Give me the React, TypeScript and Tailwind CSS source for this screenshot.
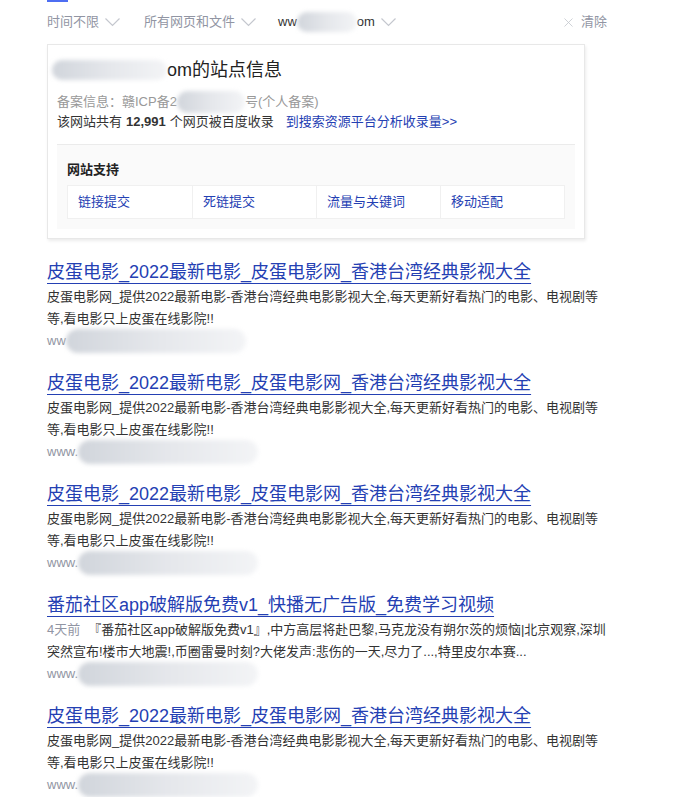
import { X } from "lucide-react"

const font = { fontFamily: '"Liberation Sans", Arial, "Noto Sans CJK SC", sans-serif' }

interface Result {
  title: string
  desc: React.ReactNode
}

function Blur({ w, h = 22 }: { w: number; h?: number }) {
  return (
    <span
      className="inline-block align-middle rounded-full bg-gradient-to-r from-gray-300 via-gray-200 to-gray-100 blur-[2px]"
      style={{ width: w, height: h }}
    />
  )
}

function Chevron() {
  return (
    <svg width="15" height="9" viewBox="0 0 15 9" className="ml-[6px]">
      <polyline points="0.5,0.5 7.5,7.5 14.5,0.5" fill="none" stroke="#c4c7ce" strokeWidth="1.2" />
    </svg>
  )
}

const normalDesc = "皮蛋电影网_提供2022最新电影-香港台湾经典电影影视大全,每天更新好看热门的电影、电视剧等等,看电影只上皮蛋在线影院!!"

const results: Result[] = [
  { title: "皮蛋电影_2022最新电影_皮蛋电影网_香港台湾经典影视大全", desc: normalDesc },
  { title: "皮蛋电影_2022最新电影_皮蛋电影网_香港台湾经典影视大全", desc: normalDesc },
  { title: "皮蛋电影_2022最新电影_皮蛋电影网_香港台湾经典影视大全", desc: normalDesc },
  {
    title: "番茄社区app破解版免费v1_快播无广告版_免费学习视频",
    desc: (
      <>
        <span className="text-[#9195a3] mr-2">4天前</span>
        『番茄社区app破解版免费v1』,中方高层将赴巴黎,马克龙没有朔尔茨的烦恼|北京观察,深圳突然宣布!楼市大地震!,币圈雷曼时刻?大佬发声:悲伤的一天,尽力了...,特里皮尔本赛...
      </>
    ),
  },
  { title: "皮蛋电影_2022最新电影_皮蛋电影网_香港台湾经典影视大全", desc: normalDesc },
]

export default function App() {
  return (
    <div className="w-[696px] h-[797px] overflow-hidden bg-white relative" style={font}>
      <div className="absolute left-[47px] top-0 w-[21px] h-[2px] bg-[#4e6ef2]" />

      <div className="pl-[47px] pr-[89px] h-[44px] flex items-center text-[13px] text-[#9195a3]">
        <div className="flex items-center mr-[24px]">
          时间不限 <Chevron />
        </div>
        <div className="flex items-center mr-[22px]">
          所有网页和文件 <Chevron />
        </div>
        <div className="flex items-center text-[#333]">
          <span className="flex items-center">
            ww<Blur w={60} h={20} />om
          </span>
          <Chevron />
        </div>
        <div className="ml-auto flex items-center gap-[5px]">
          <X className="w-[15px] h-[15px] text-[#c4c7ce]" strokeWidth={1.3} />
          清除
        </div>
      </div>

      <div className="ml-[47px] w-[538px] border border-[#e8e8e8] shadow-[1px_2px_3px_rgba(0,0,0,0.08)] px-[9px] pb-[9px]">
        <div className="flex items-center h-[48px] text-[18px] text-[#222] pt-[2px] -ml-[5px]">
          <Blur w={115} h={20} />
          <span>om的站点信息</span>
        </div>
        <div className="text-[13px] text-[#999] h-[18px] leading-[18px] flex items-center">
          备案信息：赣ICP备2<Blur w={68} h={22} />号(个人备案)
        </div>
        <div className="text-[13px] text-[#333] h-[22px] leading-[22px] flex items-center">
          该网站共有 <b className="font-bold mx-1">12,991</b> 个网页被百度收录
          <span className="ml-[12px] text-[#2440b3]">到搜索资源平台分析收录量&gt;&gt;</span>
        </div>
        <div className="mt-[11px] border-t border-[#ebebeb] bg-[#fafafa] px-[10px] pb-[10px]">
          <div className="h-[40px] flex items-center pt-[9px] text-[13px] font-bold text-[#222]">网站支持</div>
          <div className="grid grid-cols-4 border border-[#f0f0f0] bg-white">
            {["链接提交", "死链提交", "流量与关键词", "移动适配"].map((t, i) => (
              <div
                key={t}
                className={`h-[32px] flex items-center pl-[10px] text-[13px] text-[#2440b3] ${i > 0 ? "border-l border-[#f0f0f0]" : ""}`}
              >
                {t}
              </div>
            ))}
          </div>
        </div>
      </div>

      <div className="pl-[47px] pt-[21px]">
        {results.map((r, i) => (
          <div key={i} className="h-[111px]">
            <div className="text-[18px] leading-[24px] text-[#2440b3] underline underline-offset-[5px] decoration-1">{r.title}</div>
            <div className="w-[561px] text-[13px] leading-[22px] text-[#333] mt-[2px]">{r.desc}</div>
            <div className="flex items-center text-[13px] text-[#9195a3] h-[22px]">
              {i === 0 ? "ww" : "www."}
              <Blur w={180} h={24} />
            </div>
          </div>
        ))}
      </div>
    </div>
  )
}
